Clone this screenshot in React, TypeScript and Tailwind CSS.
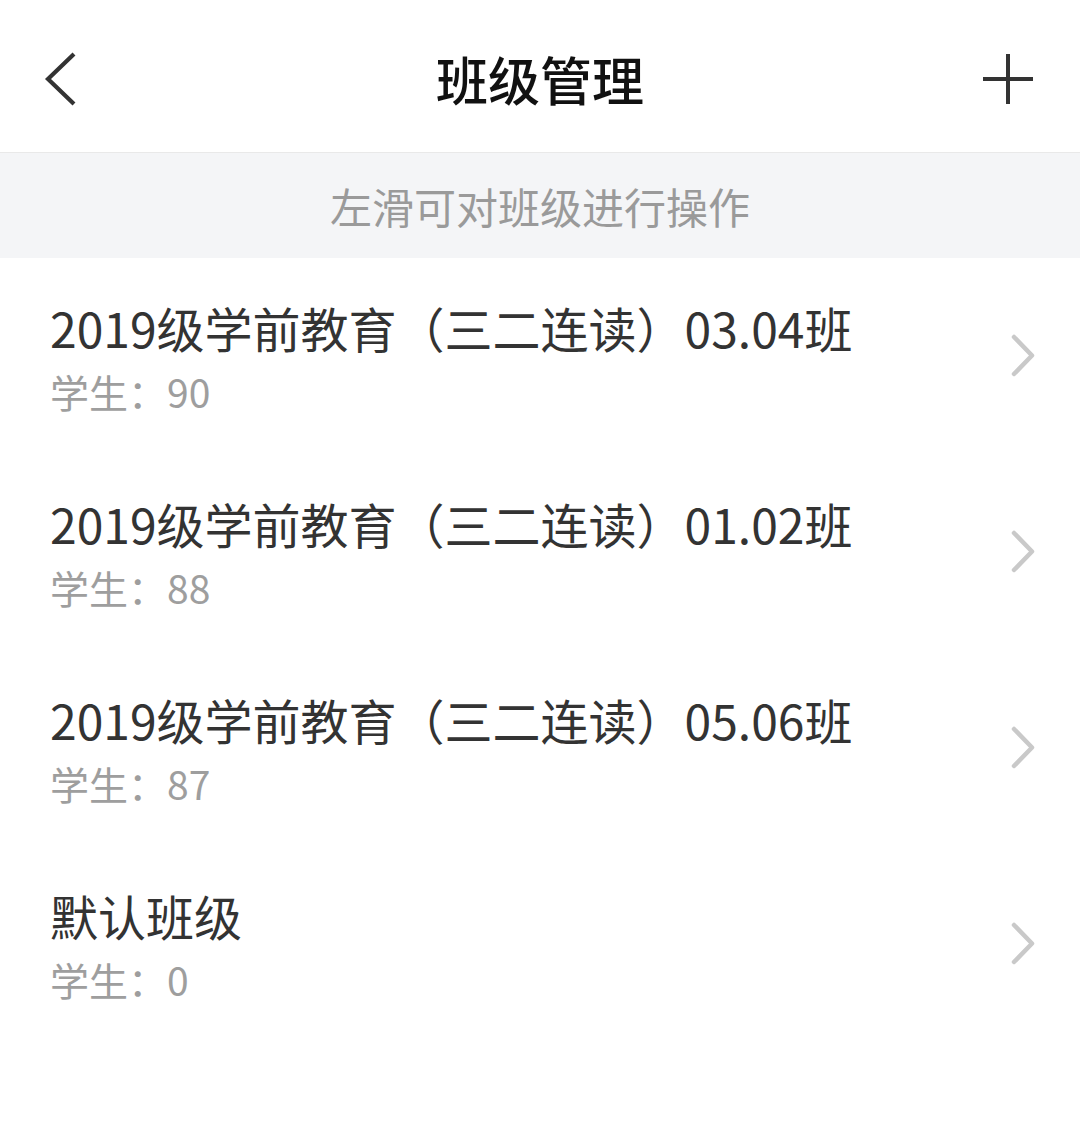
import React from "react";

const font = { fontFamily: '"Noto Sans CJK SC", "Noto Sans", sans-serif' };

const items = [
  { name: "2019级学前教育（三二连读）03.04班", count: 90 },
  { name: "2019级学前教育（三二连读）01.02班", count: 88 },
  { name: "2019级学前教育（三二连读）05.06班", count: 87 },
  { name: "默认班级", count: 0 },
];

function Chevron() {
  return (
    <svg width="28" height="44" viewBox="0 0 28 44" fill="none">
      <path d="M6 3 L24 21.5 L6 40" stroke="#c9c9c9" strokeWidth="4.5" strokeLinecap="round" strokeLinejoin="round" />
    </svg>
  );
}

export default function App() {
  return (
    <div className="w-[1080px] min-h-[1137px] bg-white" style={font}>
      <div className="h-[153px] grid grid-cols-[1fr_auto_1fr] items-center border-b border-[#e9e9e9] px-[40px] pt-[6px]">
        <div className="flex justify-start">
          <svg width="40" height="56" viewBox="0 0 40 56" fill="none">
            <path d="M34 3 L8 28 L34 53" stroke="#333333" strokeWidth="4.2" strokeLinecap="butt" strokeLinejoin="miter" />
          </svg>
        </div>
        <div className="text-[52px] leading-none text-[#111] font-medium">班级管理</div>
        <div className="flex justify-end">
          <svg width="52" height="52" viewBox="0 0 52 52" fill="none" className="mr-[6px]">
            <path d="M1 26 H51 M26 1 V51" stroke="#333333" strokeWidth="4" />
          </svg>
        </div>
      </div>
      <div className="h-[105px] bg-[#f4f5f7] flex items-center justify-center">
        <div className="text-[42px] leading-none text-[#9a9a9a]">左滑可对班级进行操作</div>
      </div>
      <div>
        {items.map((it) => (
          <div key={it.name} className="h-[196px] flex items-start justify-between pl-[50px] pr-[44px]">
            <div className="pt-[39px] flex flex-col">
              <div className="text-[48px] leading-[60px] text-[#333333]">{it.name}</div>
              <div className="mt-[9px] text-[39px] leading-[50px] text-[#9e9e9e]">学生：{it.count}</div>
            </div>
            <div className="self-center">
              <Chevron />
            </div>
          </div>
        ))}
      </div>
    </div>
  );
}
